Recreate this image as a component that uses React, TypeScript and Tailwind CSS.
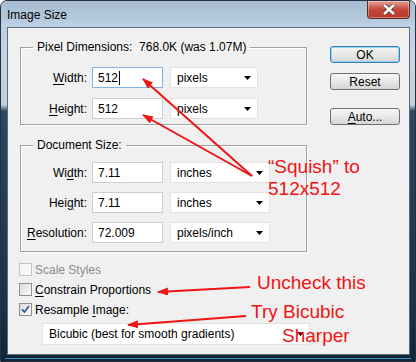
import type { ReactNode } from "react";

const UI = { fontFamily: '"Liberation Sans", Arial, sans-serif' };
const NOTE = { fontFamily: '"Liberation Sans", Arial, sans-serif' };

function U({ children }: { children: ReactNode }) {
  return <span className="underline underline-offset-2">{children}</span>;
}

function Caret() {
  return (
    <svg width="7" height="4" viewBox="0 0 7 4" className="shrink-0">
      <path d="M0 0H7L3.5 4Z" fill="#000" />
    </svg>
  );
}

function Field({
  label,
  value,
  unit,
  unitWidth,
  focused,
  cursor,
}: {
  label: ReactNode;
  value: string;
  unit: string;
  unitWidth: string;
  focused?: boolean;
  cursor?: boolean;
}) {
  return (
    <div className="flex items-center">
      <span className="w-[66px] text-right">{label}</span>
      <div
        className={`ml-[5px] flex h-[21px] w-[71px] items-center bg-white pl-[5px] border ${
          focused ? "border-[#7eb4ea]" : "border-[#c8ced4]"
        }`}
      >
        {value}
        {cursor && <span className="ml-px inline-block h-[14px] w-px bg-black" />}
      </div>
      <div
        className={`ml-[7px] flex h-[21px] ${unitWidth} items-center justify-between border border-[#e2e2e2] bg-white pl-[6px] pr-[6px]`}
      >
        <span>{unit}</span>
        <Caret />
      </div>
    </div>
  );
}

function Group({ legend, children }: { legend: ReactNode; children: ReactNode }) {
  return (
    <fieldset className="w-[287px] border border-[#a0a0a0] shadow-[inset_1px_1px_0_#fff,1px_1px_0_#fff]">
      <legend className="ml-[12px] px-[4px] leading-[14px] whitespace-pre">{legend}</legend>
      {children}
    </fieldset>
  );
}

function Check({ label, checked, disabled }: { label: ReactNode; checked?: boolean; disabled?: boolean }) {
  return (
    <div className={`flex h-[13px] items-center ${disabled ? "text-[#8d8d8d]" : ""}`}>
      <div
        className={`flex h-[13px] w-[13px] items-center justify-center border bg-gradient-to-br from-[#dcdcdc] to-[#fbfbfb] ${
          disabled ? "border-[#c4c4c4] from-[#f4f4f4]" : "border-[#8f8f8f]"
        }`}
      >
        {checked && (
          <svg width="9" height="9" viewBox="0 0 9 9">
            <path d="M1 4.5L3.5 7L8 1" fill="none" stroke="#3d5a9a" strokeWidth="1.8" />
          </svg>
        )}
      </div>
      <span className="ml-[3px]">{label}</span>
    </div>
  );
}

function Btn({ children, primary }: { children: ReactNode; primary?: boolean }) {
  return (
    <div
      className={`flex h-[17px] w-[70px] items-center justify-center rounded-[3px] border bg-gradient-to-b from-[#f6f6f6] via-[#e8e8e8] to-[#d6d6d6] ${
        primary ? "border-[#3c7fb1] shadow-[inset_0_0_0_1px_#8fd3f0]" : "border-[#707070]"
      }`}
    >
      {children}
    </div>
  );
}

export default function App() {
  return (
    <div
      className="relative h-[362px] w-[416px] overflow-hidden rounded-t-[7px] border border-[#24313e] bg-[linear-gradient(to_bottom,#b9cbdc_0px,#c7d5e3_60px,#c0cfdc_104px,#2b4763_110px,#1c3149_300px,#142539_100%)] text-[12px] text-black"
      style={UI}
    >
      {/* title bar */}
      <div className="flex h-[26px] items-start justify-between bg-[linear-gradient(to_bottom,#a7bcd1,#b3c7da_60%,#bcd2e8)]">
        <span className="pl-[6px] pt-[5px] text-[12px]">Image Size</span>
        <div className="mr-[5px] flex h-[18px] w-[43px] items-center justify-center rounded-b-[4px] border border-t-0 border-[#5b2a24] bg-gradient-to-b from-[#e0a196] via-[#c4473a] to-[#b93825] shadow-[inset_0_0_0_1px_rgba(255,255,255,0.35)]">
          <svg width="14" height="11" viewBox="0 0 14 11">
            <path d="M2 1L12 10M12 1L2 10" stroke="#5a3d38" strokeWidth="4" />
            <path d="M2 1L12 10M12 1L2 10" stroke="#fff" strokeWidth="2.4" />
          </svg>
        </div>
      </div>

      {/* client */}
      <div className="ml-[6px] flex h-[328px] w-[403px] border border-[#5d6b78] bg-[#f0f0f0] pt-[12px]">
        <div className="flex flex-col pl-[12px]">
          <Group legend={"Pixel Dimensions:  768.0K (was 1.07M)"}>
            <div className="flex flex-col gap-[10px] pb-[5px] pt-[13px]">
              <Field
                label={<><U>W</U>idth:</>}
                value="512"
                unit="pixels"
                unitWidth="w-[88px]"
                focused
                cursor
              />
              <Field label={<><U>H</U>eight:</>} value="512" unit="pixels" unitWidth="w-[88px]" />
            </div>
          </Group>
          <div className="mt-[13px]">
            <Group legend="Document Size:">
              <div className="flex flex-col gap-[9px] pb-[8px] pt-[10px]">
                <Field label={<>Wi<U>d</U>th:</>} value="7.11" unit="inches" unitWidth="w-[100px]" />
                <Field label={<>Hei<U>g</U>ht:</>} value="7.11" unit="inches" unitWidth="w-[100px]" />
                <Field label={<><U>R</U>esolution:</>} value="72.009" unit="pixels/inch" unitWidth="w-[100px]" />
              </div>
            </Group>
          </div>
          <div className="ml-[-1px] mt-[11px] flex flex-col gap-[7px]">
            <Check label="Scale Styles" disabled />
            <Check label={<><U>C</U>onstrain Proportions</>} />
            <Check label={<>Resample <U>I</U>mage:</>} checked />
          </div>
          <div className="ml-[22px] mt-[7px] flex h-[22px] w-[268px] items-center justify-between border border-[#e2e2e2] bg-white pl-[6px] pr-[5px]">
            <span>Bicubic (best for smooth gradients)</span>
            <Caret />
          </div>
        </div>
        <div className="ml-[20px] flex flex-col pt-[6px]">
          <Btn primary>OK</Btn>
          <div className="mt-[10px]">
            <Btn>Reset</Btn>
          </div>
          <div className="mt-[18px]">
            <Btn>
              <U>A</U>uto...
            </Btn>
          </div>
        </div>
      </div>
      <div className="mx-[4px] mt-[3px] h-px bg-[#3cc4e8] opacity-70" />

      {/* red annotations */}
      <svg className="pointer-events-none absolute left-[-1px] top-[-1px]" width="416" height="362">
        <defs>
          <marker id="ah" markerUnits="userSpaceOnUse" markerWidth="11" markerHeight="8" refX="10" refY="4" orient="auto">
            <path d="M0 0L11 4L0 8Z" fill="#f01414" />
          </marker>
        </defs>
        <g stroke="#f01414" strokeWidth="2" fill="none">
          <line x1="252" y1="176" x2="143" y2="79" markerEnd="url(#ah)" />
          <line x1="252" y1="176" x2="143" y2="115" markerEnd="url(#ah)" />
          <line x1="250" y1="287" x2="158" y2="292" markerEnd="url(#ah)" />
          <line x1="246" y1="316" x2="128" y2="325" markerEnd="url(#ah)" />
        </g>
      </svg>
      <div className="pointer-events-none absolute left-[267px] top-[155px] text-[19px] leading-[22px] text-[#f01414]" style={NOTE}>
        “Squish” to
        <br />
        512x512
      </div>
      <div className="pointer-events-none absolute left-[256px] top-[271px] text-[19px] leading-[22px] text-[#f01414]" style={NOTE}>
        Uncheck this
      </div>
      <div className="pointer-events-none absolute left-[250px] top-[300px] text-[19px] leading-[22px] text-[#f01414]" style={NOTE}>
        Try Bicubic
      </div>
      <div className="pointer-events-none absolute left-[281px] top-[324px] text-[19px] leading-[22px] text-[#f01414]" style={NOTE}>
        Sharper
      </div>
    </div>
  );
}
